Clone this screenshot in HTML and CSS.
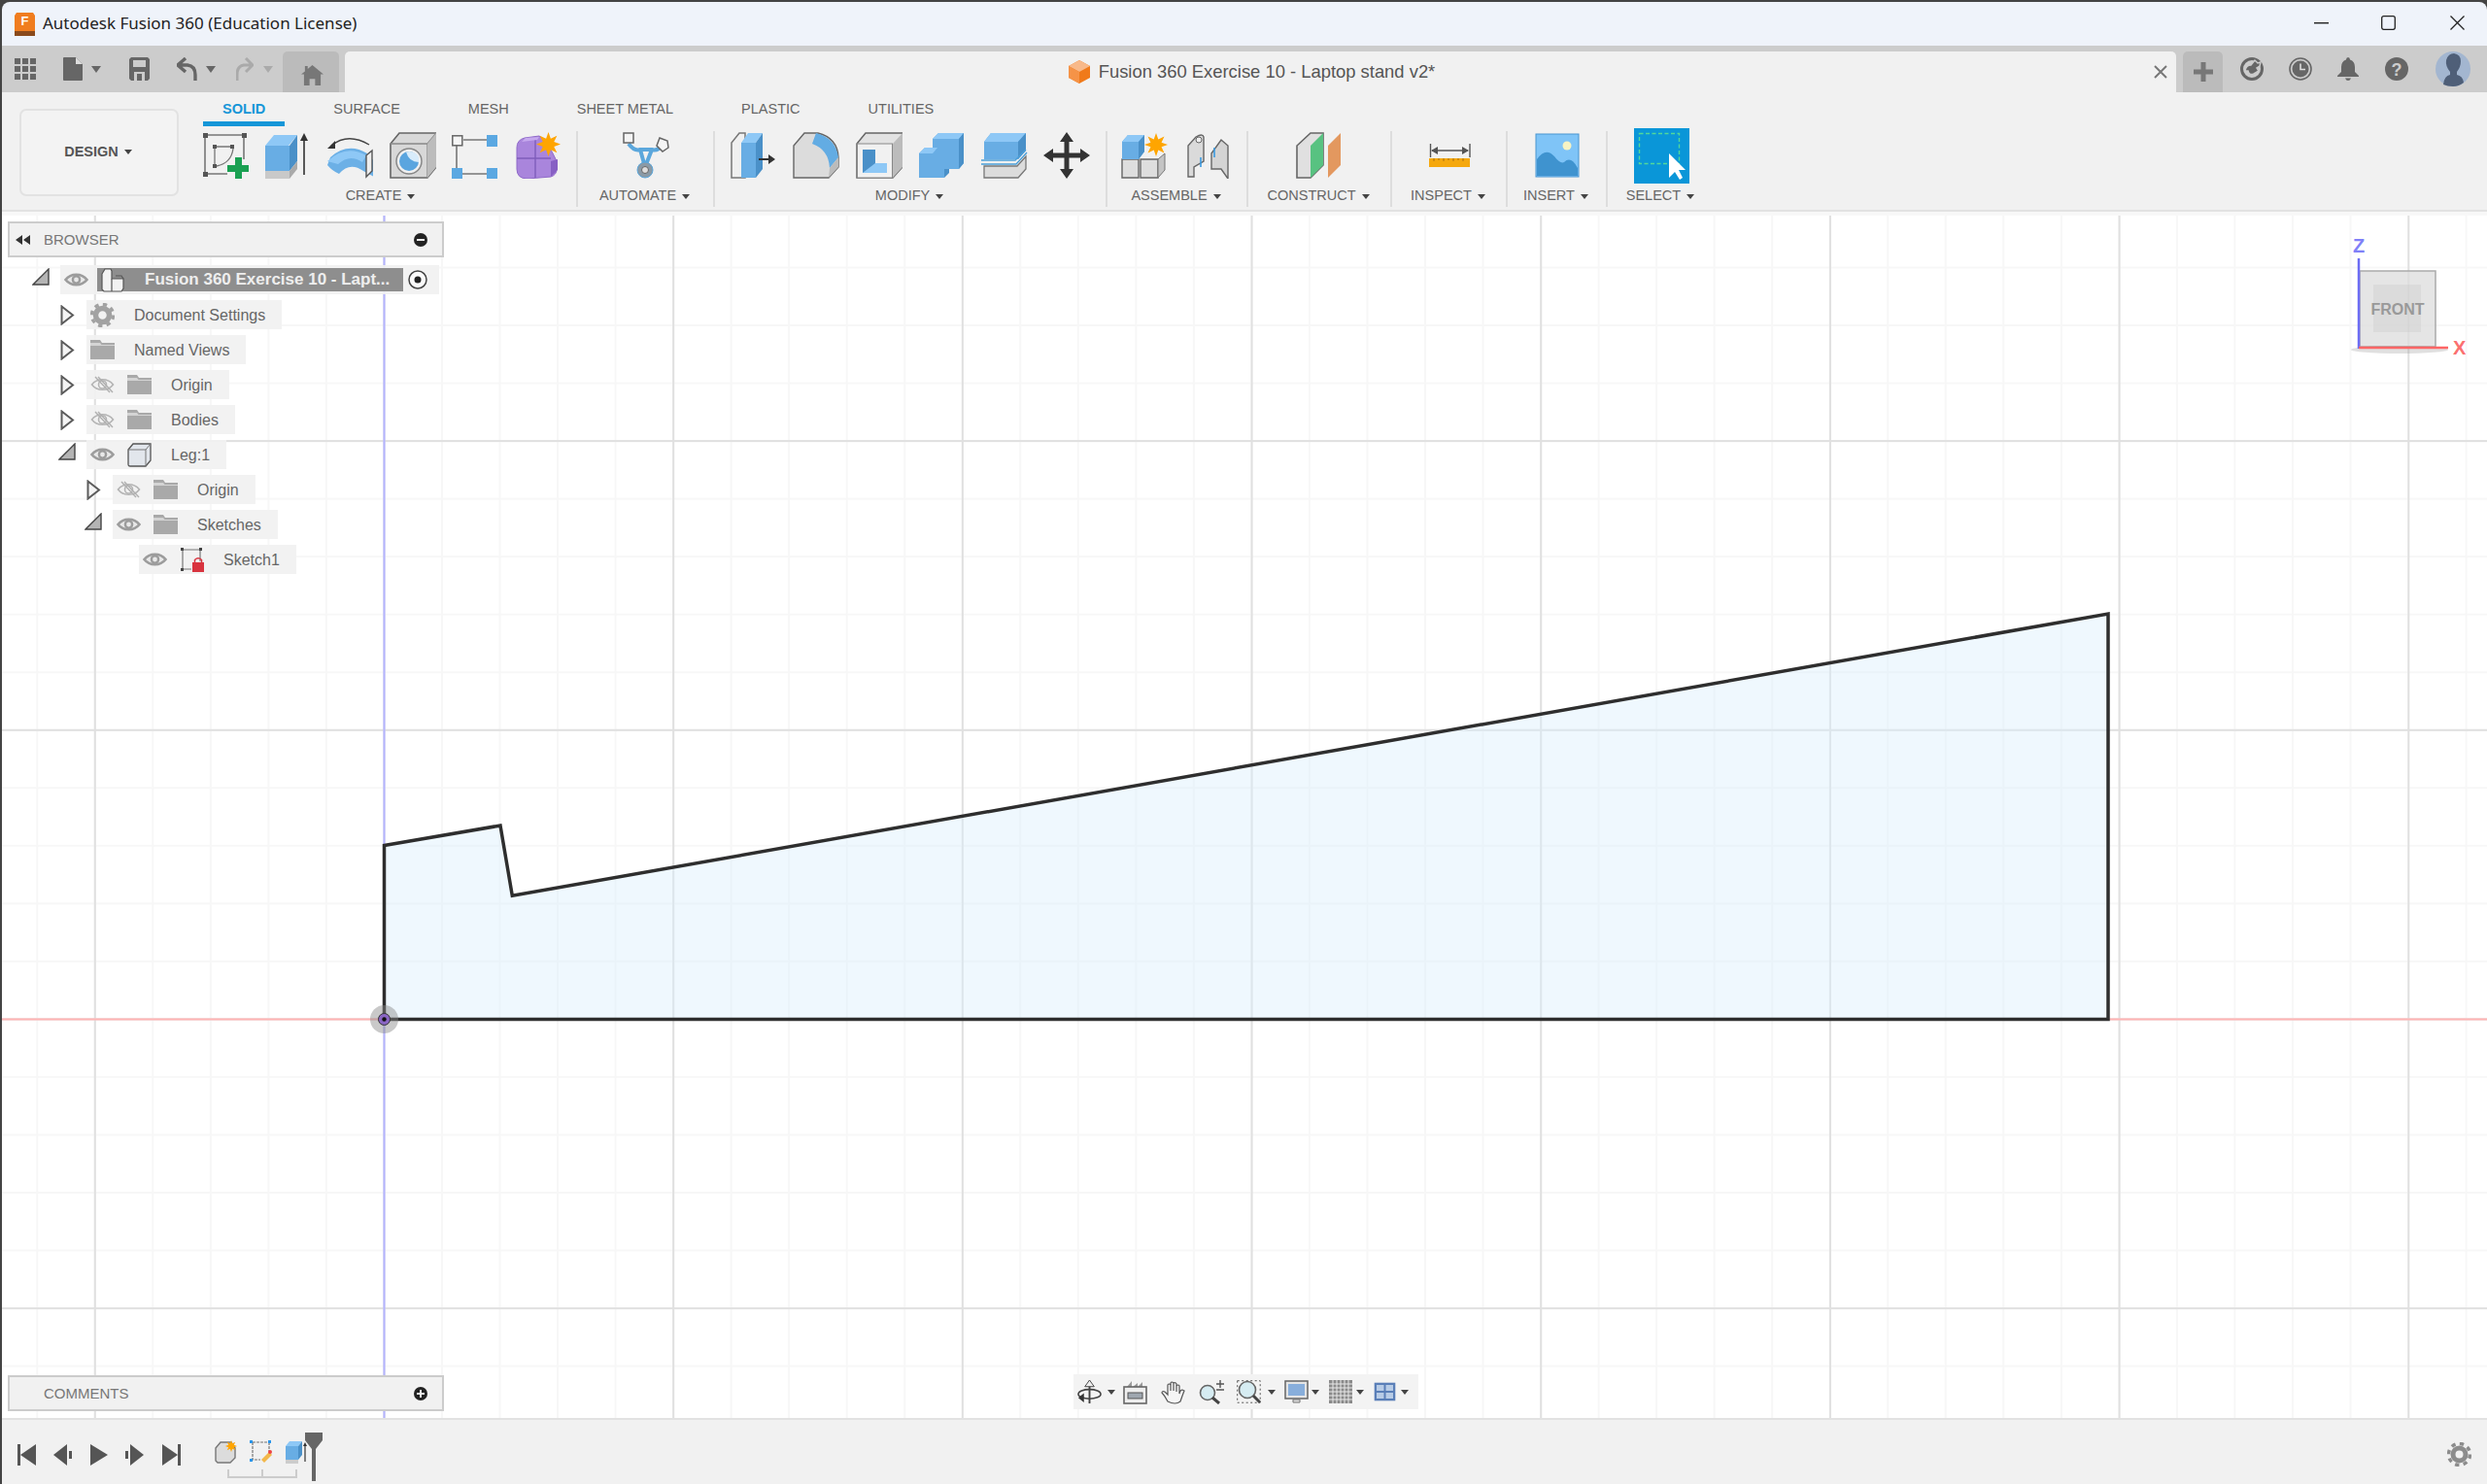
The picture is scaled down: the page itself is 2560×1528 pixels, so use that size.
FILE: index.html
```html
<!DOCTYPE html>
<html>
  <head>
    <meta charset="utf-8" />
    <title>Autodesk Fusion 360</title>
    <link rel="stylesheet" href="styles.css">
  </head>
  <body>
    <!-- shared icons -->
    <svg class="defs" width="0" height="0">
      <symbol id="spark" viewBox="0 0 24 24"><polygon fill="#ffa500" points="12,0 14.3,6.46 20.49,3.51 17.54,9.7 24,12 17.54,14.3 20.49,20.49 14.3,17.54 12,24 9.7,17.54 3.51,20.49 6.46,14.3 0,12 6.46,9.7 3.51,3.51 9.7,6.46"/></symbol>
      <symbol id="eye" viewBox="0 0 25 18"><path d="M1.5 9C7 2 18 2 23.5 9C18 16 7 16 1.5 9Z" fill="#e8e8e8" stroke="#9c9c9c" stroke-width="2.6"/><circle cx="12.5" cy="9" r="3.6" fill="#e8e8e8" stroke="#9c9c9c" stroke-width="2.4"/></symbol>
      <symbol id="eyeoff" viewBox="0 0 25 18"><path d="M1.5 9C7 2 18 2 23.5 9C18 16 7 16 1.5 9Z" fill="none" stroke="#b4b4b4" stroke-width="1.6"/><circle cx="12.5" cy="9" r="4" fill="none" stroke="#b4b4b4" stroke-width="1.6"/><path d="M5 1L20 17M8 1L23 17" stroke="#b0b0b0" stroke-width="1.4"/></symbol>
      <symbol id="folder" viewBox="0 0 25 20"><path d="M0 0H10L12 3H25V20H0Z" fill="#a9a9a9"/><path d="M0 3H10L11.5 5H25V6H0Z" fill="#d4d4d4"/></symbol>
      <symbol id="open" viewBox="0 0 15 21"><path d="M1.5 1.5L13 10.5L1.5 19.5Z" fill="#f4f4f4" stroke="#5c5c5c" stroke-width="2"/></symbol>
      <symbol id="shut" viewBox="0 0 18 18"><path d="M1 17L17 1V17Z" fill="#b4b4b4" stroke="#444" stroke-width="1.4"/></symbol>
    </svg>

    <div class="app">
      <header class="titlebar">
        <svg class="app-logo" viewBox="0 0 21 24">
          <path d="M2 0H19L21 3V20H0V3Z" fill="#f07d1f"/>
          <rect y="19" width="21" height="5" fill="#8a4a1c"/>
          <text x="10.5" y="13" class="app-logo-f">F</text>
        </svg>
        <span class="app-name">Autodesk Fusion 360 (Education License)</span>
        <div class="win-btns">
          <svg class="win-min" viewBox="0 0 15 2"><rect width="15" height="1.4" fill="#222"/></svg>
          <svg class="win-max" viewBox="0 0 15 15"><rect x=".7" y=".7" width="13.6" height="13.6" rx="2" fill="none" stroke="#222" stroke-width="1.3"/></svg>
          <svg class="win-close" viewBox="0 0 15 15"><path d="M.5 .5L14.5 14.5M14.5 .5L.5 14.5" stroke="#222" stroke-width="1.3"/></svg>
        </div>
      </header>

      <div class="tabbar">
        <svg class="qa qa-grid" viewBox="0 0 22 22" fill="#666"><rect width="6" height="6"/><rect x="8" width="6" height="6"/><rect x="16" width="6" height="6"/><rect y="8" width="6" height="6"/><rect x="8" y="8" width="6" height="6"/><rect x="16" y="8" width="6" height="6"/><rect y="16" width="6" height="6"/><rect x="8" y="16" width="6" height="6"/><rect x="16" y="16" width="6" height="6"/></svg>
        <svg class="qa qa-file" viewBox="0 0 20 24"><path d="M0 1Q0 0 1 0H13L20 7V23Q20 24 19 24H1Q0 24 0 23Z" fill="#666"/><path d="M13 0V7H20" fill="#ddd"/></svg>
        <span class="caret qa-c1"></span>
        <svg class="qa qa-save" viewBox="0 0 21 24"><path d="M2 0H19L21 2V22L19 24H2L0 22V2Z" fill="#666"/><rect x="4" y="3" width="13" height="7" fill="#ccc"/><rect x="5" y="15" width="11" height="9" fill="#ccc"/><rect x="8" y="17" width="5" height="7" fill="#666"/></svg>
        <svg class="qa qa-undo" viewBox="0 0 21 24"><path d="M9 1L1 8L9 15M2 8H11Q19 9 19 18V24" fill="none" stroke="#666" stroke-width="3.4"/></svg>
        <span class="caret qa-c2"></span>
        <svg class="qa qa-redo" viewBox="0 0 18 24"><path d="M10 1L17 8L10 15M16 8H8Q1 9 1 18V24" fill="none" stroke="#aaa" stroke-width="3"/></svg>
        <span class="caret caret-dim qa-c3"></span>
        <div class="home-tab">
          <svg viewBox="0 0 24 22"><path d="M12 0L24 10H21V22H15V15H9V22H3V10H0L4 6.7V1H7V4.2Z" fill="#777"/></svg>
        </div>
        <div class="doc-tab">
          <div class="doc-title">
            <svg viewBox="0 0 22 24"><path d="M11 0L22 6V18L11 24L0 18V6Z" fill="#f07a1a"/><path d="M11 0L22 6L11 12L0 6Z" fill="#f8b98a"/><path d="M0 6L11 12V24L0 18Z" fill="#f59347"/></svg>
            <span>Fusion 360 Exercise 10 - Laptop stand v2*</span>
          </div>
          <svg class="doc-close" viewBox="0 0 14 14"><path d="M1 1L13 13M13 1L1 13" stroke="#777" stroke-width="2"/></svg>
        </div>
        <div class="plus-tab"><svg viewBox="0 0 20 20"><path d="M10 0V20M0 10H20" stroke="#777" stroke-width="5"/></svg></div>
        <svg class="ta ta-cloud" viewBox="0 0 24 24"><circle cx="12" cy="12" r="10.5" fill="none" stroke="#666" stroke-width="3"/><path d="M5 14Q6 8 11 8L15 3L18 6L21 5L20 9L17 11L19 14L14 17Q9 19 8 14Z" fill="#666" stroke="#ccc" stroke-width="1.5"/></svg>
        <svg class="ta ta-clock" viewBox="0 0 24 24"><circle cx="12" cy="12" r="11" fill="none" stroke="#666" stroke-width="1.6"/><circle cx="12" cy="12" r="8.5" fill="#666"/><path d="M12 6.5V12.5H17" fill="none" stroke="#ddd" stroke-width="1.6"/></svg>
        <svg class="ta ta-bell" viewBox="0 0 22 24"><path d="M11 0Q13 0 13 2.5Q18 4 18 10V15L22 19V20H0V19L4 15V10Q4 4 9 2.5Q9 0 11 0Z" fill="#666"/><path d="M8 21.5H14Q13 24 11 24Q9 24 8 21.5Z" fill="#666"/></svg>
        <svg class="ta ta-help" viewBox="0 0 24 24"><circle cx="12" cy="12" r="12" fill="#666"/><text x="12" y="18.5" class="help-q">?</text></svg>
        <svg class="ta ta-avatar" viewBox="0 0 36 36"><circle cx="18" cy="18" r="18" fill="#a3b6d0"/><path d="M8 34Q9 25 15 24V21Q10 15 11 9Q13 2 19 2Q26 3 26 10Q26 16 22 21V24Q28 25 29 32Q24 36 18 36Q12 36 8 34Z" fill="#4f5f78"/></svg>
      </div>

      <div class="ribbon">
        <button class="design-btn">DESIGN<span class="caret"></span></button>
        <div class="ribbon-main">
          <nav class="tabs">
            <span class="tab tab-active">SOLID</span>
            <span class="tab">SURFACE</span>
            <span class="tab">MESH</span>
            <span class="tab">SHEET METAL</span>
            <span class="tab">PLASTIC</span>
            <span class="tab">UTILITIES</span>
          </nav>
        </div>

        <div class="groups">
          <section class="group g-create">
            <div class="tools">
              <svg class="tool" viewBox="0 0 48 48">
                <path d="M3 3H43V28M3 3V43H26" fill="none" stroke="#777" stroke-width="1.6"/>
                <path d="M1 1h5v5H1zM41 1h5v5h-5zM1 41h5v5H1zM11 13h4v4h-4zM29 13h4v4h-4zM11 33h4v4h-4z" fill="#555"/>
                <path d="M13 17V33M15 15H29M15 35Q30 32 32 17" fill="none" stroke="#777" stroke-width="1.3"/>
                <path d="M34 26h7v8h7v7h-7v7h-7v-7h-8v-7h8z" fill="#1aa052"/>
              </svg>
              <svg class="tool" viewBox="0 0 48 48">
                <path d="M1 14L10 3H34L25 14Z" fill="#8ec8f6"/><rect x="1" y="14" width="25" height="26" fill="#68ade4"/><path d="M26 14L34 3V30L26 40Z" fill="#4a90c8"/>
                <path d="M1 40H26V48H1Z" fill="#c9c9c9"/><path d="M26 40L34 30V38L26 48Z" fill="#aaa"/>
                <path d="M41 44V6" stroke="#333" stroke-width="1.6"/><path d="M41 1L45 9H37Z" fill="#333"/>
              </svg>
              <svg class="tool" viewBox="0 0 48 48">
                <path d="M4 26Q22 10 42 22L49 30V46L38 40Q24 30 13 43Q6 40 1 34Z" fill="#6cb0e6"/>
                <path d="M1 30Q20 12 41 24L37 31Q24 22 12 33Z" fill="#8ec8f6"/>
                <path d="M41 24L47 19V40L41 46Z" fill="#eee" stroke="#555" stroke-width="1.4"/>
                <path d="M5 14Q22 0 44 13" fill="none" stroke="#444" stroke-width="1.4"/><path d="M1 17L9 9L9 17Z" fill="#333"/>
              </svg>
              <svg class="tool" viewBox="0 0 48 48">
                <path d="M1 12L10 1H48V36L39 47H1Z" fill="#d8d8d8" stroke="#666" stroke-width="1.6"/>
                <path d="M1 12H39V47M39 12L48 1" fill="none" stroke="#888" stroke-width="1.3"/>
                <path d="M39 12L48 1V36L39 47Z" fill="#bcbcbc"/>
                <circle cx="20" cy="30" r="13" fill="#f0f0f0" stroke="#888" stroke-width="1.5"/>
                <circle cx="20" cy="30" r="10" fill="#5aa5df"/><path d="M17 20.5Q20 31 30 31Q31 23 25 21Q21 19.5 17 20.5Z" fill="#d8ecfb"/>
              </svg>
              <svg class="tool" viewBox="0 0 48 48">
                <path d="M12 8H37M5 14V37M11 43H37" stroke="#777" stroke-width="1.6"/>
                <rect x=".8" y="3.8" width="10" height="10" fill="#f6f6f6" stroke="#666" stroke-width="1.5"/>
                <rect x="36" y="3" width="11" height="12" fill="#5ba8e2"/><rect y="37" width="11" height="12" fill="#5ba8e2"/><rect x="36" y="37" width="11" height="12" fill="#5ba8e2"/>
              </svg>
              <svg class="tool" viewBox="0 0 48 48">
                <path d="M3 16Q3 8 11 6L26 4Q34 8 44 30V38Q44 44 38 46L14 48Q3 48 3 38Z" fill="#a985dc" stroke="#8f6ac8" stroke-width="1"/>
                <path d="M3 27H38M22 8V47" stroke="#7f5dbb" stroke-width="1.4"/><path d="M38 30L45 28V39L38 46Z" fill="#8760c4"/>
                <path d="M8 10L24 8L26 5L12 6Z" fill="#c6a9ee"/>
                <use href="#spark" x="23" y="0" width="25" height="25"/>
              </svg>
            </div>
            <div class="group-label">CREATE<span class="caret"></span></div>
          </section>
          <i class="sep"></i>
          <section class="group g-automate">
            <div class="tools">
              <svg class="tool" viewBox="0 0 48 48">
                <path d="M6 12Q12 20 18 18H30Q36 20 41 13M18 18L23 36M30 18L23 36" fill="none" stroke="#5ba7dc" stroke-width="4"/>
                <rect x="1" y="1" width="10" height="10" fill="#f4f4f4" stroke="#666" stroke-width="1.5"/>
                <path d="M38 6L46 9L47 16L41 20L35 14Z" fill="#f4f4f4" stroke="#666" stroke-width="1.5"/>
                <circle cx="23" cy="39" r="8" fill="#8a9aa6" stroke="#5ba7dc" stroke-width="1"/><circle cx="23" cy="39" r="3.5" fill="#ddd" stroke="#666"/>
              </svg>
            </div>
            <div class="group-label">AUTOMATE<span class="caret"></span></div>
          </section>
          <i class="sep"></i>
          <section class="group g-modify">
            <div class="tools">
              <svg class="tool" viewBox="0 0 48 48">
                <path d="M1 47V11L9 1H15V47Z" fill="#f0f0f0" stroke="#777" stroke-width="1.5"/>
                <path d="M11 11L18 1H33L26 11Z" fill="#8ec8f6"/><rect x="11" y="11" width="15" height="36" fill="#68ade4"/><path d="M26 11L33 1V38L26 47Z" fill="#4a90c8"/>
                <path d="M29 28H42" stroke="#333" stroke-width="2"/><path d="M46 28L39 23V33Z" fill="#333"/>
              </svg>
              <svg class="tool" viewBox="0 0 48 48">
                <path d="M1 14L12 1H26Q46 6 47 26V36L37 47H1Z" fill="#dcdcdc" stroke="#666" stroke-width="1.4"/>
                <path d="M20 12L24 1Q44 6 47 26L38 37Q37 18 20 12Z" fill="#63ace3"/><path d="M38 37L47 26V36L37 47Z" fill="#bbb"/>
              </svg>
              <svg class="tool" viewBox="0 0 48 48">
                <path d="M1 12L10 1H48V36L38 47H1Z" fill="#e2e2e2" stroke="#666" stroke-width="1.5"/><path d="M38 12L48 1V36L38 47Z" fill="#bcbcbc"/>
                <rect x="1.5" y="12" width="36" height="35" fill="#f1f1f1" stroke="#888" stroke-width="1"/>
                <rect x="7" y="18" width="25" height="24" fill="#8ec8f6"/><path d="M7 18H20V32L7 42Z" fill="#4a90c8"/><path d="M20 18H32V32H20Z" fill="#f1f1f1"/>
              </svg>
              <svg class="tool" viewBox="0 0 48 48">
                <path d="M15 7L21 1H47V32L42 38H15Z" fill="#68ade4"/><path d="M15 7L21 1H47L42 7Z" fill="#8ec8f6"/><path d="M42 7L47 1V32L42 38Z" fill="#4a90c8"/>
                <path d="M1 22L7 16H27V47H1Z" fill="#68ade4"/><path d="M1 22L7 16H20L15 22Z" fill="#8ec8f6"/><path d="M27 38H32V42L27 47Z" fill="#4a90c8"/>
              </svg>
              <svg class="tool" viewBox="0 0 48 48">
                <path d="M3 10L10 1H46V19L38 28H3Z" fill="#68ade4"/><path d="M3 10L10 1H46L38 10Z" fill="#8ec8f6"/><path d="M38 10L46 1V19L38 28Z" fill="#4a90c8"/>
                <path d="M0 33H36L47 21M0 29H35L46 18" fill="none" stroke="#4a9ed8" stroke-width="1.4"/>
                <path d="M3 35H37L46 25V38L38 47H3Z" fill="#dcdcdc" stroke="#777" stroke-width="1.3"/>
              </svg>
              <svg class="tool" viewBox="0 0 48 48"><path d="M24 0L31 10H26.5V21.5H38V17L48 24L38 31V26.500H26.500V38H31L24 48L17 38H21.500V26.500H10V31L0 24L10 17V21.500H21.500V10H17Z" fill="#333"/></svg>
            </div>
            <div class="group-label">MODIFY<span class="caret"></span></div>
          </section>
          <i class="sep"></i>
          <section class="group g-assemble">
            <div class="tools">
              <svg class="tool" viewBox="0 0 48 48">
                <path d="M1 28H18V47H1ZM20 28H38V47H20Z" fill="#dedede" stroke="#666" stroke-width="1.4"/><path d="M38 28L45 22V39L38 47Z" fill="#c4c4c4" stroke="#777"/>
                <path d="M1 10L7 3H24V20L18 28H1Z" fill="#68ade4"/><path d="M1 10L7 3H24L18 10Z" fill="#8ec8f6"/><path d="M18 10L24 3V20L18 28Z" fill="#4a90c8"/>
                <use href="#spark" x="24" y="0" width="24" height="26"/>
              </svg>
              <svg class="tool" viewBox="0 0 48 48">
                <path d="M1 46V14L9 5Q16 1 17 5V30L7 36V46Z" fill="#dadada" stroke="#666" stroke-width="1.4"/>
                <circle cx="12" cy="8" r="3" fill="#eee" stroke="#666"/>
                <path d="M25 22L35 8L42 14V48L35 38H25Z" fill="#d4d4d4" stroke="#666" stroke-width="1.4"/>
                <path d="M14 26V36M28 16V26" stroke="#3a9ae0" stroke-width="1.6"/>
              </svg>
            </div>
            <div class="group-label">ASSEMBLE<span class="caret"></span></div>
          </section>
          <i class="sep"></i>
          <section class="group g-construct">
            <div class="tools">
              <svg class="tool" viewBox="0 0 48 48">
                <path d="M1 47V14L15 1H28V34L15 47Z" fill="#e0e0e0" stroke="#666" stroke-width="1.6"/>
                <path d="M15 47V14L28 1V34Z" fill="#58c281"/>
                <path d="M33 47V14L46 1V34Z" fill="#e3985f"/>
              </svg>
            </div>
            <div class="group-label">CONSTRUCT<span class="caret"></span></div>
          </section>
          <i class="sep"></i>
          <section class="group g-inspect">
            <div class="tools">
              <svg class="tool" viewBox="0 0 48 48">
                <path d="M4.500 12V26M45 12V26M6 19H43" stroke="#555" stroke-width="1.4" fill="none"/><path d="M5 19L12 15V23ZM44 19L37 15V23Z" fill="#555"/>
                <rect x="3" y="27" width="42" height="9" fill="#f5a80e"/>
                <path d="M8 27v3M13 27v2M18 27v3M23 27v2M28 27v3M33 27v2M38 27v3" stroke="#a86f10" stroke-width="1"/>
              </svg>
            </div>
            <div class="group-label">INSPECT<span class="caret"></span></div>
          </section>
          <i class="sep"></i>
          <section class="group g-insert">
            <div class="tools">
              <svg class="tool" viewBox="0 0 48 48">
                <rect x="2" y="2" width="44" height="44" fill="#7fc4f7" stroke="#4a95d0" stroke-width="1"/>
                <path d="M3 45V28Q12 15 21 25Q27 33 31 31Q38 24 45 37V45Z" fill="#3f93cf"/>
                <circle cx="34" cy="14" r="4.500" fill="#f6f3c4"/>
              </svg>
            </div>
            <div class="group-label">INSERT<span class="caret"></span></div>
          </section>
          <i class="sep"></i>
          <section class="group g-select">
            <div class="tools">
              <svg class="tool-wide" viewBox="0 0 57 57">
                <rect width="57" height="57" fill="#0a96d8"/>
                <rect x="5.500" y="5.500" width="41" height="31" fill="none" stroke="#52d89a" stroke-width="1.4" stroke-dasharray="4 2.500"/>
                <path d="M36 26V51L42 45L47 53L50 51L46 43H53Z" fill="#fff"/>
              </svg>
            </div>
            <div class="group-label">SELECT<span class="caret"></span></div>
          </section>
        </div>
      </div>

      <main class="canvas">
        <svg class="scene" viewBox="2 222 2558 1238" preserveAspectRatio="none">
          <path d="M395.500 222V1460" stroke="#b4b4ff" stroke-width="2"/>
          <path d="M2 1049.500H2560" stroke="#ffb4b4" stroke-width="2"/>
          <polygon points="395.500,1049.500 395.500,870.500 515,850 527.300,922.300 2170,632 2170,1049.500" fill="#d8eefc" fill-opacity=".42" stroke="#2e2e2e" stroke-width="3.500"/>
          <circle cx="395.500" cy="1049.500" r="14.500" fill="#888" fill-opacity=".45"/>
          <circle cx="395.500" cy="1049.500" r="6" fill="#8a66c4" stroke="#333" stroke-width="1"/>
          <circle cx="395.500" cy="1049.500" r="2.200" fill="#111"/>
        </svg>

        <div class="browser">
          <div class="panel-head">
            <svg class="panel-back" viewBox="0 0 15 10"><path d="M7 0V10L0 5ZM15 0V10L8 5Z" fill="#333"/></svg>
            <span class="panel-title">BROWSER</span>
            <svg class="panel-toggle" viewBox="0 0 14 14"><circle cx="7" cy="7" r="7" fill="#222"/><rect x="3" y="6" width="8" height="2" fill="#eee"/></svg>
          </div>
          <ul class="tree">
            <li class="row">
              <svg class="twist twist-shut"><use href="#shut" width="18" height="18"/></svg>
              <div class="node node-root">
                <svg class="nic-eye"><use href="#eye" width="25" height="18"/></svg>
                <div class="root-bar">
                  <svg class="root-ic" viewBox="0 0 24 26"><path d="M1 7L4 2H10L11 4V12L23 12V22L21 25H3L1 23Z" fill="#f2f2f2" stroke="#555" stroke-width="1.200"/><path d="M11 12V25M15 9H21L23 12" fill="none" stroke="#555" stroke-width="1.200"/></svg>
                  <span class="root-name">Fusion 360 Exercise 10 - Lapt...</span>
                </div>
                <svg class="radio" viewBox="0 0 20 20"><circle cx="10" cy="10" r="9" fill="#fafafa" stroke="#444" stroke-width="1.500"/><circle cx="10" cy="10" r="3.500" fill="#222"/></svg>
              </div>
            </li>
            <li class="row d1">
              <svg class="twist"><use href="#open" width="15" height="21" y="2"/></svg>
              <div class="node">
                <svg class="nic" viewBox="0 0 25 25"><circle cx="12.500" cy="12.500" r="7" fill="none" stroke="#a2a2a2" stroke-width="5.500"/><circle cx="12.500" cy="12.500" r="11" fill="none" stroke="#a2a2a2" stroke-width="3.500" stroke-dasharray="4.320 4.320"/></svg>
                <span class="node-name">Document Settings</span>
              </div>
            </li>
            <li class="row d1">
              <svg class="twist"><use href="#open" width="15" height="21" y="2"/></svg>
              <div class="node">
                <svg class="nic"><use href="#folder" width="25" height="20" y="2"/></svg>
                <span class="node-name">Named Views</span>
              </div>
            </li>
            <li class="row d1">
              <svg class="twist"><use href="#open" width="15" height="21" y="2"/></svg>
              <div class="node">
                <svg class="nic"><use href="#eyeoff" width="25" height="18" y="3"/></svg>
                <svg class="nic"><use href="#folder" width="25" height="20" y="2"/></svg>
                <span class="node-name">Origin</span>
              </div>
            </li>
            <li class="row d1">
              <svg class="twist"><use href="#open" width="15" height="21" y="2"/></svg>
              <div class="node">
                <svg class="nic"><use href="#eyeoff" width="25" height="18" y="3"/></svg>
                <svg class="nic"><use href="#folder" width="25" height="20" y="2"/></svg>
                <span class="node-name">Bodies</span>
              </div>
            </li>
            <li class="row d1">
              <svg class="twist twist-shut"><use href="#shut" width="18" height="18"/></svg>
              <div class="node">
                <svg class="nic"><use href="#eye" width="25" height="18" y="3"/></svg>
                <svg class="nic" viewBox="0 0 25 25"><path d="M1 7L6 1H24V18L19 24H3Q1 24 1 22Z" fill="#e2e6ec" stroke="#555" stroke-width="1.300"/><path d="M19 24V7H1M19 7L24 1" fill="none" stroke="#777" stroke-width="1"/></svg>
                <span class="node-name">Leg:1</span>
              </div>
            </li>
            <li class="row d2">
              <svg class="twist"><use href="#open" width="15" height="21" y="2"/></svg>
              <div class="node">
                <svg class="nic"><use href="#eyeoff" width="25" height="18" y="3"/></svg>
                <svg class="nic"><use href="#folder" width="25" height="20" y="2"/></svg>
                <span class="node-name">Origin</span>
              </div>
            </li>
            <li class="row d2">
              <svg class="twist twist-shut"><use href="#shut" width="18" height="18"/></svg>
              <div class="node">
                <svg class="nic"><use href="#eye" width="25" height="18" y="3"/></svg>
                <svg class="nic"><use href="#folder" width="25" height="20" y="2"/></svg>
                <span class="node-name">Sketches</span>
              </div>
            </li>
            <li class="row d3">
              <span class="twist"></span>
              <div class="node">
                <svg class="nic"><use href="#eye" width="25" height="18" y="3"/></svg>
                <svg class="nic" viewBox="0 0 25 25"><path d="M3 2H21M3 2V22H12M21 2V14" fill="none" stroke="#777" stroke-width="1.200"/><path d="M1 0h3v3H1zM20 0h3v3h-3zM1 21h3v3H1z" fill="#444"/><path d="M13 15h12v10H13z" fill="#d8343f"/><path d="M15.500 15V12.500Q19 9 22.500 12.500V15" fill="none" stroke="#d8343f" stroke-width="1.500"/></svg>
                <span class="node-name">Sketch1</span>
              </div>
            </li>
          </ul>
        </div>

        <div class="comments">
          <span class="panel-title panel-title-c">COMMENTS</span>
          <svg class="panel-toggle" viewBox="0 0 14 14"><circle cx="7" cy="7" r="7" fill="#222"/><path d="M3 6h3V3h2v3h3v2H8v3H6V8H3z" fill="#eee"/></svg>
        </div>

        <svg class="viewcube" viewBox="0 0 160 130">
          <rect x="19" y="26" width="78" height="78" fill="#dcdcdc" fill-opacity=".75" stroke="#aaa" stroke-width="1.500"/>
          <rect x="33" y="40" width="49" height="49" fill="#bbb" fill-opacity=".22"/>
          <text x="58" y="71" class="cube-label">FRONT</text>
          <ellipse cx="60" cy="107" rx="50" ry="4" fill="#999" fill-opacity=".3"/>
          <path d="M18 13V106" stroke="#6c6cf4" stroke-width="2.500"/>
          <path d="M18 105H110" stroke="#f66" stroke-width="2.500"/>
          <text x="12" y="7" class="axis-z">Z</text>
          <text x="115" y="112" class="axis-x">X</text>
        </svg>

        <div class="navbar">
          <svg class="nv nv-orbit" viewBox="0 0 26 26"><path d="M13 25V5" stroke="#444" stroke-width="2"/><path d="M13 0L18 7H8Z" fill="#eee" stroke="#444"/><ellipse cx="13" cy="15" rx="12" ry="5" fill="none" stroke="#444" stroke-width="1.600"/><path d="M1 19L7 14V24Z" fill="#333"/></svg>
          <span class="caret nv-c1"></span>
          <svg class="nv nv-cam" viewBox="0 0 25 25"><path d="M4 7L9 1V7M10 7L15 3V7M15 7L20 2V7" fill="#999"/><rect x="1" y="7" width="23" height="17" fill="#eee" stroke="#666" stroke-width="1.600"/><rect x="5" y="13" width="15" height="6" fill="#9fa7b0" stroke="#555"/></svg>
          <svg class="nv nv-hand" viewBox="0 0 25 25"><path d="M7 22Q4 16 1 13Q1 11 4 12L7 15V5Q8 3 10 5V11V3Q11 1 13 3V11V3Q15 2 16 4V12V6Q18 4 19 6V14Q20 10 22 10L24 11Q22 16 20 22Q15 26 7 22Z" fill="#f5f5f5" stroke="#555" stroke-width="1.200"/></svg>
          <svg class="nv nv-zoom" viewBox="0 0 26 25"><circle cx="9" cy="13" r="7.500" fill="#d6ecf2" stroke="#666" stroke-width="1.600"/><path d="M14 18L21 24" stroke="#444" stroke-width="3"/><path d="M22 0V8M18 4H26M18 10H26" stroke="#555" stroke-width="1.400"/></svg>
          <svg class="nv nv-fit" viewBox="0 0 25 25"><rect x=".7" y=".7" width="23.500" height="22.500" fill="none" stroke="#555" stroke-dasharray="2 2.500"/><circle cx="11" cy="10" r="8.500" fill="#d6ecf2" stroke="#666" stroke-width="1.600"/><path d="M17 16L24 23" stroke="#444" stroke-width="3"/></svg>
          <span class="caret nv-c2"></span>
          <svg class="nv nv-disp" viewBox="0 0 25 25"><rect x="1" y="1" width="23" height="18" fill="#e4e4e4" stroke="#666" stroke-width="1.500"/><rect x="4" y="4" width="17" height="12" fill="#88aedb"/><path d="M9 20H16V23H9Z" fill="#ddd" stroke="#777"/></svg>
          <span class="caret nv-c3"></span>
          <svg class="nv nv-grid" viewBox="0 0 24 24"><rect width="24" height="24" fill="#8a8a8a"/><path d="M4 0V24M8 0V24M12 0V24M16 0V24M20 0V24M0 4H24M0 8H24M0 12H24M0 16H24M0 20H24" stroke="#e8e8e8" stroke-width="1"/></svg>
          <span class="caret nv-c4"></span>
          <svg class="nv nv-view" viewBox="0 0 23 20"><rect x=".7" y=".7" width="21.600" height="18.600" fill="#5a7fb8"/><rect x="3" y="3" width="7.500" height="6" fill="#b8cce6"/><rect x="12.500" y="3" width="7.500" height="6" fill="#b8cce6"/><rect x="3" y="11" width="7.500" height="6" fill="#b8cce6"/><rect x="12.500" y="11" width="7.500" height="6" fill="#b8cce6"/></svg>
          <span class="caret nv-c5"></span>
        </div>
      </main>

      <footer class="timeline">
        <svg class="pb pb-first" viewBox="0 0 19 22"><rect width="3" height="22" fill="#555"/><path d="M19 0V22L3 11Z" fill="#555"/></svg>
        <svg class="pb pb-prev" viewBox="0 0 19 22"><path d="M14 0V22L0 11Z" fill="#555"/><rect x="16" y="7" width="3" height="8" fill="#555"/></svg>
        <svg class="pb pb-play" viewBox="0 0 18 22"><path d="M0 0L18 11L0 22Z" fill="#555"/></svg>
        <svg class="pb pb-next" viewBox="0 0 19 22"><rect y="7" width="3" height="8" fill="#555"/><path d="M5 0V22L19 11Z" fill="#555"/></svg>
        <svg class="pb pb-last" viewBox="0 0 19 22"><path d="M0 0V22L16 11Z" fill="#555"/><rect x="16" width="3" height="22" fill="#555"/></svg>
        <div class="steps">
          <div class="step-icons">
            <svg class="step" viewBox="0 0 23 24"><path d="M1 8L6 2H17L21 8V18L16 23H3L1 21Z" fill="#dcdcdc" stroke="#777" stroke-width="1.400"/><use href="#spark" x="11" y="0" width="12" height="12"/></svg>
            <svg class="step" viewBox="0 0 23 24"><path d="M3 2H20M3 2V20H11M20 2V11" fill="none" stroke="#777" stroke-width="1.200" stroke-dasharray="3 1"/><path d="M0 0h3v3H0zM19 0h3v3h-3zM0 19h3v3H0z" fill="#2a95ea"/><path d="M12 20L20 12L23 15L15 23Z" fill="#f2b84b"/><circle cx="21" cy="12" r="2" fill="#e44"/></svg>
            <svg class="step" viewBox="0 0 23 24"><path d="M1 6L5 1H18L14 6Z" fill="#8ec8f6"/><rect x="1" y="6" width="13" height="14" fill="#68ade4"/><path d="M14 6L18 1V15L14 20Z" fill="#4a90c8"/><path d="M1 20H14V24H1Z" fill="#ccc"/><path d="M21 22V5" stroke="#333" stroke-width="1.200"/><path d="M21 2L23 6H19Z" fill="#333"/></svg>
          </div>
          <div class="step-bracket"></div>
          <svg class="marker" viewBox="0 0 18 50"><path d="M0 0H18V8L11 17V50H7V17L0 8Z" fill="#666"/></svg>
        </div>
        <svg class="gear" viewBox="0 0 25 25"><circle cx="12.500" cy="12.500" r="6.500" fill="none" stroke="#8c8c8c" stroke-width="5"/><circle cx="12.500" cy="12.500" r="11" fill="none" stroke="#8c8c8c" stroke-width="3.500" stroke-dasharray="4.320 4.320"/></svg>
      </footer>
    </div>
  </body>
</html>
```

FILE: styles.css
```css
* {
  box-sizing: border-box;
}

html,
body {
  margin: 0;
  height: 100%;
  overflow: hidden;
  background-color: #444;
  font-family: "Liberation Sans", Arial, sans-serif;
  color: #666;
}

.defs {
  position: absolute;
}

svg {
  display: block;
  flex: none;
}

.app {
  display: flex;
  flex-direction: column;
  height: 1526px;
  margin: 2px 0 0 2px;
  border-radius: 8px 8px 0 0;
  overflow: hidden;
}

/* window title */
.titlebar {
  display: flex;
  align-items: center;
  height: 45px;
  padding-left: 13px;
  background-color: #eff3fa;
}

.app-logo {
  width: 21px;
  height: 24px;
}

.app-logo-f {
  font: bold 13px "Liberation Sans", sans-serif;
  fill: #fff;
  text-anchor: middle;
}

.app-name {
  margin: 0 0 2px 8px;
  font: 17px "Noto Sans", sans-serif;
  color: #222;
}

.win-btns {
  display: flex;
  align-items: center;
  margin: 0 0 2px auto;
}

.win-min {
  width: 15px;
  height: 2px;
}

.win-max,
.win-close {
  width: 15px;
  height: 15px;
}

.win-max {
  margin-left: 54px;
}

.win-close {
  margin: 0 23px 0 56px;
}

/* tabs strip */
.tabbar {
  display: flex;
  align-items: center;
  height: 48px;
  padding: 0 17px 0 13px;
  background-color: #ccc;
}

.caret {
  display: inline-block;
  flex: none;
  width: 0;
  height: 0;
  margin-left: 6px;
  border-left: 4px solid transparent;
  border-right: 4px solid transparent;
  border-top: 5px solid #444;
  vertical-align: middle;
}

.qa-c1,
.qa-c2,
.qa-c3 {
  border-left-width: 5px;
  border-right-width: 5px;
  border-top: 7px solid #666;
}

.caret-dim {
  border-top-color: #aaa;
}

.qa-grid {
  width: 22px;
  height: 22px;
}

.qa-file {
  width: 20px;
  height: 24px;
  margin-left: 28px;
}

.qa-c1 {
  margin-left: 9px;
}

.qa-save {
  width: 21px;
  height: 24px;
  margin-left: 29px;
}

.qa-undo {
  width: 21px;
  height: 24px;
  margin-left: 28px;
}

.qa-c2 {
  margin-left: 9px;
}

.qa-redo {
  width: 18px;
  height: 24px;
  margin-left: 21px;
}

.qa-c3 {
  margin-left: 10px;
}

.home-tab {
  display: flex;
  align-items: center;
  justify-content: center;
  align-self: flex-end;
  width: 58px;
  height: 42px;
  margin-left: 10px;
  border-radius: 5px 5px 0 0;
  background-color: #bbb;
}

.home-tab svg {
  width: 23px;
  height: 21px;
  margin: 6px 0 0 3px;
}

.doc-tab {
  display: flex;
  align-items: center;
  align-self: flex-end;
  flex: 1;
  height: 42px;
  margin-left: 6px;
  padding: 0 9px 0 5px;
  border-radius: 5px 5px 0 0;
  background-color: #f1f1f1;
}

.doc-title {
  display: flex;
  align-items: center;
  justify-content: center;
  flex: 1;
  gap: 9px;
  font-size: 18.400px;
  color: #555;
}

.doc-title svg {
  width: 22px;
  height: 24px;
}

.doc-close {
  width: 14px;
  height: 14px;
}

.plus-tab {
  display: flex;
  align-items: center;
  justify-content: center;
  align-self: flex-end;
  width: 41px;
  height: 42px;
  margin-left: 7px;
  border-radius: 5px 5px 0 0;
  background-color: #bbb;
}

.plus-tab svg {
  width: 20px;
  height: 20px;
}

.ta {
  width: 24px;
  height: 24px;
}

.ta-cloud {
  margin-left: 18px;
}

.ta-clock {
  margin-left: 26px;
}

.ta-bell {
  width: 22px;
  margin-left: 26px;
}

.ta-help {
  margin-left: 27px;
}

.help-q {
  font: bold 18px "Liberation Sans", sans-serif;
  fill: #ccc;
  text-anchor: middle;
}

.ta-avatar {
  width: 36px;
  height: 36px;
  margin-left: 28px;
}

/* ribbon */
.ribbon {
  position: relative;
  flex: none;
  height: 127px;
  padding: 17px 0 0 18px;
  border-bottom: 4px solid #f8f8f8;
  box-shadow: inset 0 -2px 0 #e2e2e2;
  background-color: #f1f1f1;
}

.design-btn {
  display: block;
  width: 164px;
  height: 90px;
  padding: 0 2px 3px 0;
  border: 2px solid #e2e2e2;
  border-radius: 7px;
  background-color: #f3f3f3;
  font: bold 14.500px "Liberation Sans", sans-serif;
  color: #555;
}

.ribbon-main {
  position: absolute;
  top: 0;
  left: 207px;
}

.tabs {
  display: flex;
  gap: 30px;
  height: 35px;
}

.tab {
  height: 35px;
  padding: 9px 20px 0;
  font-size: 14.500px;
  line-height: 17px;
  color: #666;
}

.tab-active {
  border-bottom: 5px solid #1696d8;
  color: #1696d8;
  font-weight: bold;
}

.groups {
  position: absolute;
  top: 35px;
  left: 182px;
  display: flex;
  height: 82px;
}

.group {
  display: flex;
  flex-direction: column;
  align-items: center;
  flex: none;
}

.tools {
  display: flex;
  align-items: center;
  height: 60px;
}

.tool {
  width: 48px;
  height: 48px;
}

.tool-wide {
  width: 57px;
  height: 57px;
}

.group-label {
  margin: 2px 2px 0 0;
  font-size: 14.500px;
  line-height: 18px;
  color: #666;
  white-space: nowrap;
}

.sep {
  flex: none;
  width: 2px;
  height: 78px;
  margin-top: 5px;
  background-color: #ddd;
}

.g-create {
  width: 409px;
  padding-left: 8px;
}

.g-create .tools,
.g-modify .tools {
  gap: 16.400px;
}

.g-automate {
  width: 139px;
}

.g-modify {
  width: 402px;
}

.g-assemble {
  width: 143px;
}

.g-assemble .tools {
  gap: 20px;
}

.g-construct {
  width: 146px;
}

.g-inspect {
  width: 117px;
}

.g-insert {
  width: 101px;
}

.g-select {
  width: 110px;
}

/* drawing area */
.canvas {
  position: relative;
  flex: 1;
  overflow: hidden;
  background-color: #fff;
  background-image:
    linear-gradient(#e0e0e0 0 2px, transparent 2px),
    linear-gradient(90deg, #e0e0e0 0 2px, transparent 2px),
    linear-gradient(#f7f7f7 0 2px, transparent 2px),
    linear-gradient(90deg, #f7f7f7 0 2px, transparent 2px);
  background-size:
    100% 297.700px,
    297.700px 100%,
    100% 59.540px,
    59.540px 100%;
  background-position:
    0 231.100px,
    94.800px 0,
    0 52.500px,
    35.260px 0;
}

.scene {
  position: absolute;
  top: 0;
  left: 0;
  width: 100%;
  height: 100%;
}

.browser {
  position: absolute;
  top: 6px;
  left: 6px;
  width: 449px;
}

.panel-head,
.comments {
  display: flex;
  align-items: center;
  height: 37px;
  border: 2px solid #ccc;
  background-color: #f1f1f1;
}

.panel-back {
  width: 15px;
  height: 10px;
  margin-left: 6px;
}

.panel-title {
  margin-left: 14px;
  font-size: 15px;
  color: #777;
}

.panel-title-c {
  margin-left: 35px;
}

.panel-toggle {
  width: 14px;
  height: 14px;
  margin: 0 15px 0 auto;
}

.tree {
  margin: 8px 0 0;
  padding: 0 0 0 27px;
  list-style: none;
}

.row {
  display: flex;
  align-items: center;
  height: 30px;
  margin-bottom: 6px;
}

.d1 {
  margin-left: 27px;
}

.d2 {
  margin-left: 54px;
}

.d3 {
  margin-left: 81px;
}

.twist {
  flex: none;
  width: 27px;
  height: 25px;
}

.twist-shut {
  margin-left: -2px;
  width: 29px;
}

.node {
  display: flex;
  align-items: center;
  height: 30px;
  padding: 0 17px 0 4px;
  background-color: rgba(241, 241, 241, 0.92);
}

.nic {
  width: 25px;
  height: 25px;
  margin-right: 13px;
}

.node-name {
  padding: 1px 0 0 7px;
  font-size: 16px;
  color: #666;
}

.node-root {
  width: 390px;
  padding: 0;
}

.nic-eye {
  width: 25px;
  height: 18px;
  margin: 0 9px 0 4px;
}

.root-bar {
  display: flex;
  align-items: center;
  width: 315px;
  height: 24px;
  padding-left: 4px;
  background-color: #8e8e8e;
}

.root-ic {
  width: 24px;
  height: 26px;
}

.root-name {
  margin-left: 21px;
  font-size: 17px;
  font-weight: bold;
  color: #eee;
  white-space: nowrap;
}

.radio {
  width: 20px;
  height: 20px;
  margin-left: 5px;
}

.comments {
  position: absolute;
  bottom: 7px;
  left: 6px;
  width: 449px;
}

.viewcube {
  position: absolute;
  top: 31px;
  left: 2408px;
  width: 160px;
  height: 130px;
  overflow: visible;
}

.cube-label {
  font: bold 16px "Liberation Sans", sans-serif;
  fill: #999;
  text-anchor: middle;
}

.axis-z {
  font: bold 20px "Liberation Sans", sans-serif;
  fill: #8080f8;
}

.axis-x {
  font: bold 20px "Liberation Sans", sans-serif;
  fill: #fb7070;
}

.navbar {
  position: absolute;
  bottom: 9px;
  left: 1103px;
  display: flex;
  align-items: center;
  width: 355px;
  height: 36px;
  padding-left: 4px;
  background-color: #f3f3f3;
}

.nv {
  width: 25px;
  height: 25px;
}

.nv-c1 {
  margin-left: 6px;
}

.nv-cam {
  margin-left: 8px;
}

.nv-hand {
  margin-left: 14px;
}

.nv-zoom {
  width: 26px;
  margin-left: 14px;
}

.nv-fit {
  margin-left: 13px;
}

.nv-c2 {
  margin-left: 7px;
}

.nv-disp {
  margin-left: 9px;
}

.nv-c3 {
  margin-left: 3px;
}

.nv-grid {
  width: 24px;
  height: 24px;
  margin-left: 10px;
}

.nv-c4 {
  margin-left: 4px;
}

.nv-view {
  width: 23px;
  height: 20px;
  margin-left: 10px;
}

.nv-c5 {
  margin-left: 5px;
}

/* bottom timeline */
.timeline {
  display: flex;
  align-items: center;
  flex: none;
  height: 68px;
  padding: 5px 0 0 16px;
  border-top: 2px solid #e2e2e2;
  background-color: #f1f1f1;
}

.pb {
  width: 19px;
  height: 22px;
}

.pb-prev {
  margin-left: 18px;
}

.pb-play {
  width: 18px;
  margin-left: 19px;
}

.pb-next {
  margin-left: 18px;
}

.pb-last {
  margin-left: 19px;
}

.steps {
  position: relative;
  width: 112px;
  height: 50px;
  margin: 5px 0 0 35px;
}

.step-icons {
  display: flex;
  gap: 13px;
  margin-top: 8px;
}

.step {
  width: 23px;
  height: 24px;
}

.step-bracket {
  width: 72px;
  height: 9px;
  margin: 6px 0 0 13px;
  border: 2px solid #ccc;
  border-top: 0;
  background: linear-gradient(#ccc, #ccc) center / 2px 100% no-repeat;
}

.marker {
  position: absolute;
  top: 0;
  left: 93px;
  width: 18px;
  height: 50px;
}

.gear {
  width: 25px;
  height: 25px;
  margin: 0 16px 0 auto;
}
```
